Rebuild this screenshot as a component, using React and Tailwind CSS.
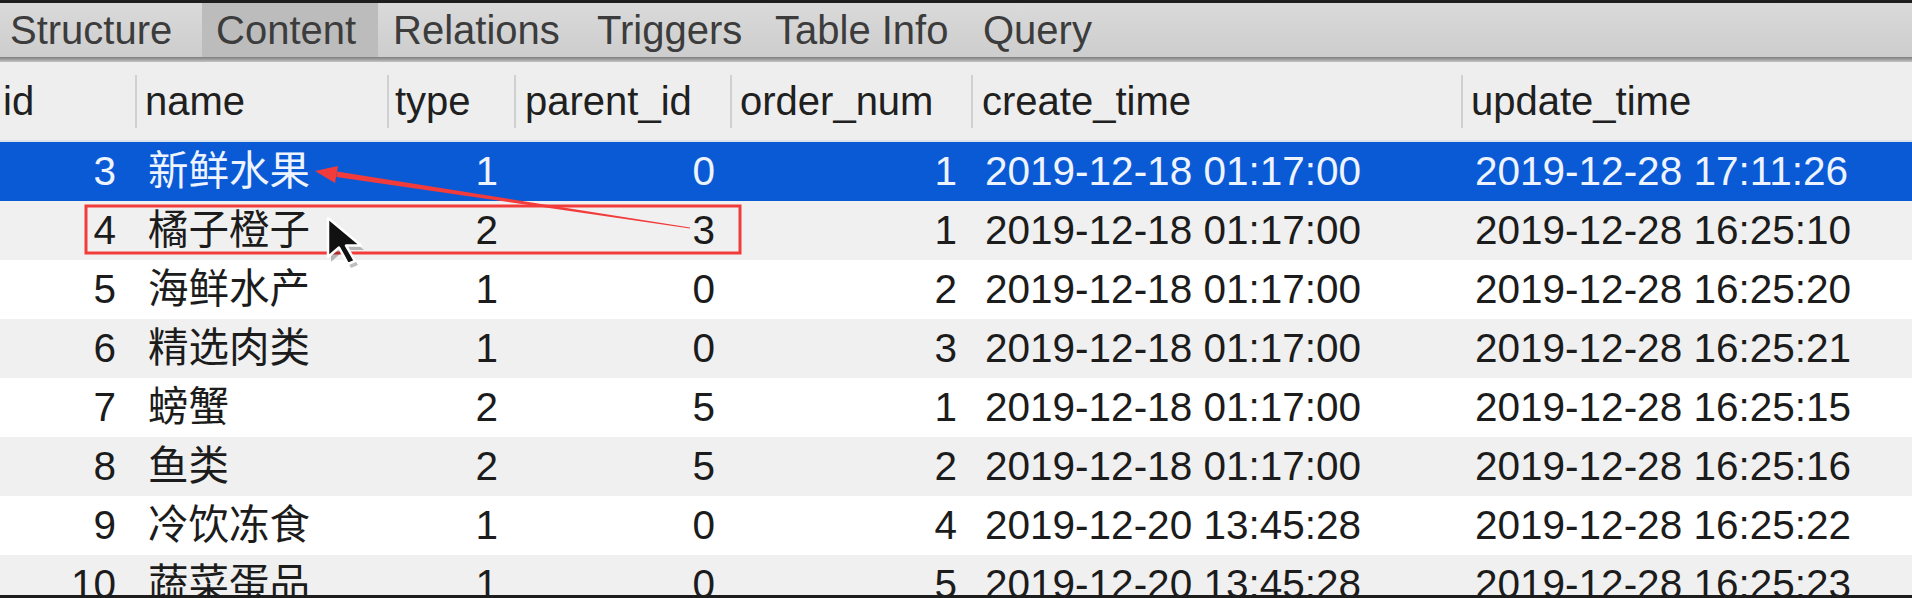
import React from 'react';

const tabs = [
  { label: 'Structure', cls: 'w-[202px] pl-[10px]' },
  { label: 'Content', cls: 'w-[176px] pl-[14px] bg-[#bcbcbc]' },
  { label: 'Relations', cls: 'w-[200px] pl-[15px]' },
  { label: 'Triggers', cls: 'w-[182px] pl-[19px]' },
  { label: 'Table Info', cls: 'w-[208px] pl-[15px]' },
  { label: 'Query', cls: 'w-[140px] pl-[15px]' },
];

const cols = [
  { label: 'id', w: 'w-[135px]', head: 'pl-[3px]', cell: 'justify-end pr-[19px]' },
  { label: 'name', w: 'w-[252px]', head: 'pl-[8px]', cell: 'justify-start pl-[13px]' },
  { label: 'type', w: 'w-[127px]', head: 'pl-[6px]', cell: 'justify-end pr-[16px]' },
  { label: 'parent_id', w: 'w-[216px]', head: 'pl-[9px]', cell: 'justify-end pr-[15px]' },
  { label: 'order_num', w: 'w-[241px]', head: 'pl-[8px]', cell: 'justify-end pr-[14px]' },
  { label: 'create_time', w: 'w-[490px]', head: 'pl-[9px]', cell: 'justify-start pl-[14px]' },
  { label: 'update_time', w: 'flex-1', head: 'pl-[8px]', cell: 'justify-start pl-[14px]' },
];

const rows = [
  [3, '新鲜水果', 1, 0, 1, '2019-12-18 01:17:00', '2019-12-28 17:11:26'],
  [4, '橘子橙子', 2, 3, 1, '2019-12-18 01:17:00', '2019-12-28 16:25:10'],
  [5, '海鲜水产', 1, 0, 2, '2019-12-18 01:17:00', '2019-12-28 16:25:20'],
  [6, '精选肉类', 1, 0, 3, '2019-12-18 01:17:00', '2019-12-28 16:25:21'],
  [7, '螃蟹', 2, 5, 1, '2019-12-18 01:17:00', '2019-12-28 16:25:15'],
  [8, '鱼类', 2, 5, 2, '2019-12-18 01:17:00', '2019-12-28 16:25:16'],
  [9, '冷饮冻食', 1, 0, 4, '2019-12-20 13:45:28', '2019-12-28 16:25:22'],
  [10, '蔬菜蛋品', 1, 0, 5, '2019-12-20 13:45:28', '2019-12-28 16:25:23'],
];

function rowBg(i) {
  if (i === 0) return 'bg-[#0a5ad6] text-[#eef4ff]';
  return i % 2 === 1 ? 'bg-[#f0f0f0] text-[#1c1c1c]' : 'bg-white text-[#1c1c1c]';
}

export default function App() {
  return (
    <div className="relative flex h-[598px] w-full flex-col overflow-hidden bg-white font-['Liberation_Sans','Noto_Sans_CJK_SC',sans-serif] leading-none">
      <div className="h-[3px] bg-[#1d1d1d]" />

      {/* tab bar */}
      <div className="flex h-[54px] bg-gradient-to-b from-[#dadada] to-[#cdcdcd] text-[40px] text-[#3c3c3c]">
        {tabs.map((t) => (
          <div key={t.label} className={`flex h-full items-center whitespace-nowrap ${t.cls}`}>
            {t.label}
          </div>
        ))}
      </div>
      <div className="h-[5px] bg-gradient-to-b from-[#7e7e7e] to-[#c4c4c4]" />

      {/* column header */}
      <div className="flex h-[80px] border-b-2 border-[#dde3ec] bg-[#eeeeee] text-[40px] text-[#202020]">
        {cols.map((c, i) => (
          <div key={c.label} className={`flex h-full items-center ${c.w}`}>
            {i > 0 && <div className="h-[53px] w-[2px] bg-[#d0d0d0]" />}
            <span className={`whitespace-nowrap ${c.head}`}>{c.label}</span>
          </div>
        ))}
      </div>

      {/* rows */}
      <div className="flex-1 overflow-hidden">
        {rows.map((r, i) => (
          <div key={r[0]} className={`flex h-[59px] text-[40.5px] ${rowBg(i)}`}>
            {cols.map((c, j) => (
              <div key={c.label} className={`flex h-full items-center whitespace-nowrap ${c.w} ${c.cell}`}>
                {r[j]}
              </div>
            ))}
          </div>
        ))}
      </div>
      <div className="h-[3px] bg-[#1d1d1d]" />

      {/* annotation overlay */}
      <svg className="pointer-events-none absolute inset-0 h-full w-full" viewBox="0 0 1912 598">
        <rect x="86" y="206" width="654" height="47" fill="none" stroke="#f23b3b" strokeWidth="3" />
        <polygon points="337,171.6 690,227.6 690,228.4 336.3,176.9" fill="#f23b3b" />
        <polygon points="315,171 338,166 335,183" fill="#f23b3b" />
        <polygon
          points="331,222 331,262 342,252 351,268 358,265 349,250 364,250"
          fill="rgba(0,0,0,0.25)"
        />
        <polygon
          points="328,218 328,257 339,247.5 348,264 355,261 346,245.5 361,245.5"
          fill="#111"
          stroke="#fff"
          strokeWidth="2.5"
          strokeLinejoin="round"
        />
      </svg>
    </div>
  );
}
